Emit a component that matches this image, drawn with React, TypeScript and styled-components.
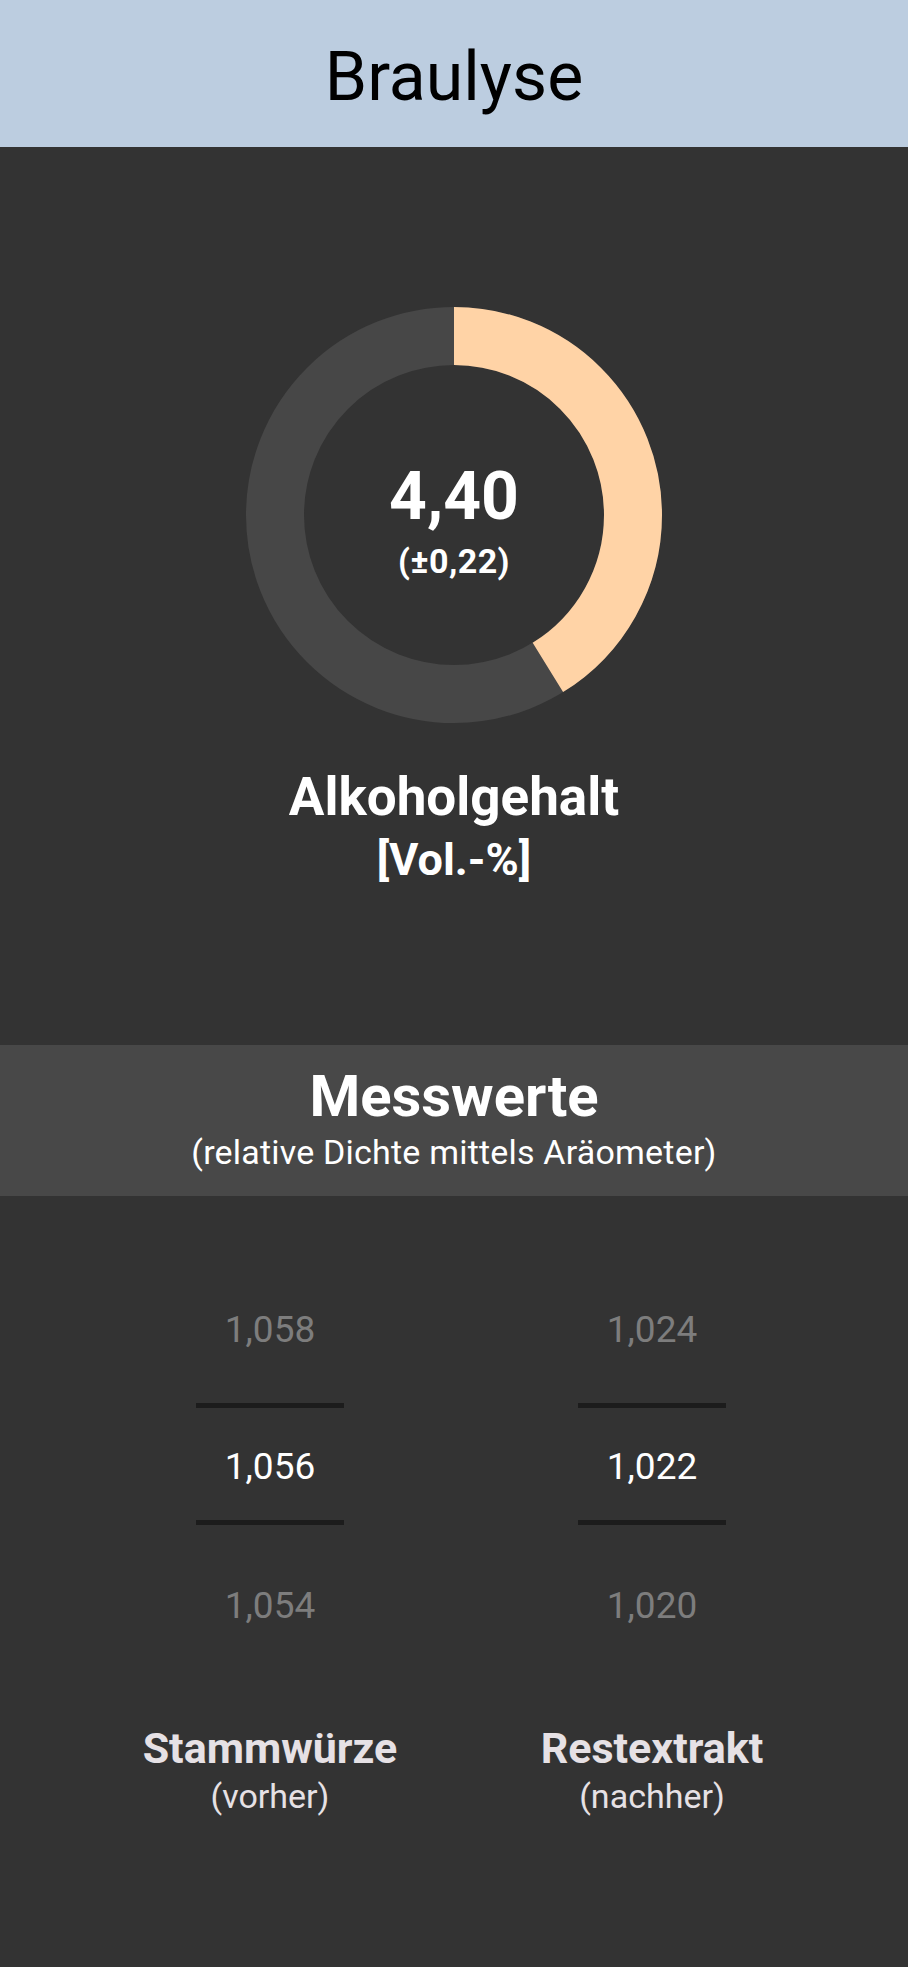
import styled, { createGlobalStyle } from "styled-components";

const GlobalStyle = createGlobalStyle`
  html, body {
    margin: 0;
    padding: 0;
    background: #333333;
    font-family: Roboto, "Noto Sans", "Liberation Sans", sans-serif;
  }
  * {
    box-sizing: border-box;
  }
`;

// Donut geometry
const SIZE = 416;
const RADIUS = 179;
const STROKE = 58;
const CIRC = 2 * Math.PI * RADIUS;
const FRACTION = 148.3 / 360;

interface IPicker {
  prev: string;
  value: string;
  next: string;
  title: string;
  subtitle: string;
}

const pickers: IPicker[] = [
  {
    prev: "1,058",
    value: "1,056",
    next: "1,054",
    title: "Stammwürze",
    subtitle: "(vorher)",
  },
  {
    prev: "1,024",
    value: "1,022",
    next: "1,020",
    title: "Restextrakt",
    subtitle: "(nachher)",
  },
];

function Donut() {
  return (
    <DonutWrap>
      <svg width={SIZE} height={SIZE} viewBox={`0 0 ${SIZE} ${SIZE}`}>
        <circle
          cx={SIZE / 2}
          cy={SIZE / 2}
          r={RADIUS}
          fill="none"
          stroke="#474747"
          strokeWidth={STROKE}
        />
        <circle
          cx={SIZE / 2}
          cy={SIZE / 2}
          r={RADIUS}
          fill="none"
          stroke="#ffd3a6"
          strokeWidth={STROKE}
          strokeDasharray={`${CIRC * FRACTION} ${CIRC}`}
          transform={`rotate(-90 ${SIZE / 2} ${SIZE / 2})`}
        />
      </svg>
      <DonutLabel>
        <BigValue>4,40</BigValue>
        <Tolerance>(±0,22)</Tolerance>
      </DonutLabel>
    </DonutWrap>
  );
}

function Picker({ prev, value, next, title, subtitle }: IPicker) {
  return (
    <PickerColumn>
      <PickerItem $height={147}>{prev}</PickerItem>
      <Divider />
      <SelectedItem>{value}</SelectedItem>
      <Divider />
      <PickerItem $height={161}>{next}</PickerItem>
      <PickerTitle>{title}</PickerTitle>
      <PickerSubtitle>{subtitle}</PickerSubtitle>
    </PickerColumn>
  );
}

export default function App() {
  return (
    <>
      <GlobalStyle />
      <Page>
        <Header>Braulyse</Header>

        <ResultSection>
          <Donut />
          <ResultTitle>Alkoholgehalt</ResultTitle>
          <ResultUnit>[Vol.-%]</ResultUnit>
        </ResultSection>

        <Band>
          <BandTitle>Messwerte</BandTitle>
          <BandSubtitle>(relative Dichte mittels Aräometer)</BandSubtitle>
        </Band>

        <PickerRow>
          {pickers.map((p) => (
            <Picker key={p.title} {...p} />
          ))}
        </PickerRow>
      </Page>
    </>
  );
}

const Page = styled.div`
  width: 908px;
  min-height: 1967px;
  background: #333333;
  display: flex;
  flex-direction: column;
`;

const Header = styled.header`
  height: 147px;
  padding-top: 8px;
  background: #bccde0;
  color: #000;
  font-size: 68px;
  line-height: 139px;
  text-align: center;
`;

const ResultSection = styled.section`
  display: flex;
  flex-direction: column;
  align-items: center;
  padding: 160px 0 159px;
  color: #fff;
`;

const DonutWrap = styled.div`
  display: grid;
  width: ${SIZE}px;
  height: ${SIZE}px;

  svg,
  > div {
    grid-area: 1 / 1;
  }
`;

const DonutLabel = styled.div`
  display: flex;
  flex-direction: column;
  align-items: center;
  padding-top: 155px;
`;

const BigValue = styled.div`
  font-size: 66px;
  font-weight: 700;
  line-height: 70px;
`;

const Tolerance = styled.div`
  margin-top: 9px;
  font-size: 34px;
  font-weight: 700;
  letter-spacing: 0.4px;
  line-height: 40px;
`;

const ResultTitle = styled.div`
  margin-top: 44px;
  font-size: 53px;
  font-weight: 700;
  line-height: 60px;
`;

const ResultUnit = styled.div`
  margin-top: 7px;
  font-size: 45px;
  font-weight: 700;
  line-height: 52px;
`;

const Band = styled.section`
  background: #484848;
  color: #fff;
  text-align: center;
  padding: 19px 0 24px;
`;

const BandTitle = styled.div`
  font-size: 58px;
  font-weight: 700;
  line-height: 64px;
`;

const BandSubtitle = styled.div`
  margin-top: 4px;
  font-size: 34px;
  letter-spacing: 0.2px;
  line-height: 40px;
`;

const PickerRow = styled.section`
  display: flex;
  justify-content: center;
  gap: 82px;
  padding: 60px 0 0 14px;
`;

const PickerColumn = styled.div`
  width: 300px;
  display: flex;
  flex-direction: column;
  align-items: center;
  text-align: center;
`;

const PickerItem = styled.div<{ $height: number }>`
  height: ${(p) => p.$height}px;
  line-height: ${(p) => p.$height}px;
  font-size: 37px;
  color: #7d7d7d;
`;

const SelectedItem = styled.div`
  height: 112px;
  padding-top: 6px;
  line-height: 106px;
  font-size: 37px;
  color: #ffffff;
`;

const Divider = styled.div`
  width: 148px;
  height: 5px;
  background: #1c1c1c;
`;

const PickerTitle = styled.div`
  margin-top: 37px;
  font-size: 43px;
  font-weight: 700;
  line-height: 50px;
  color: #e6e1e5;
`;

const PickerSubtitle = styled.div`
  margin-top: 3px;
  font-size: 34px;
  line-height: 40px;
  color: #e6e1e5;
`;
